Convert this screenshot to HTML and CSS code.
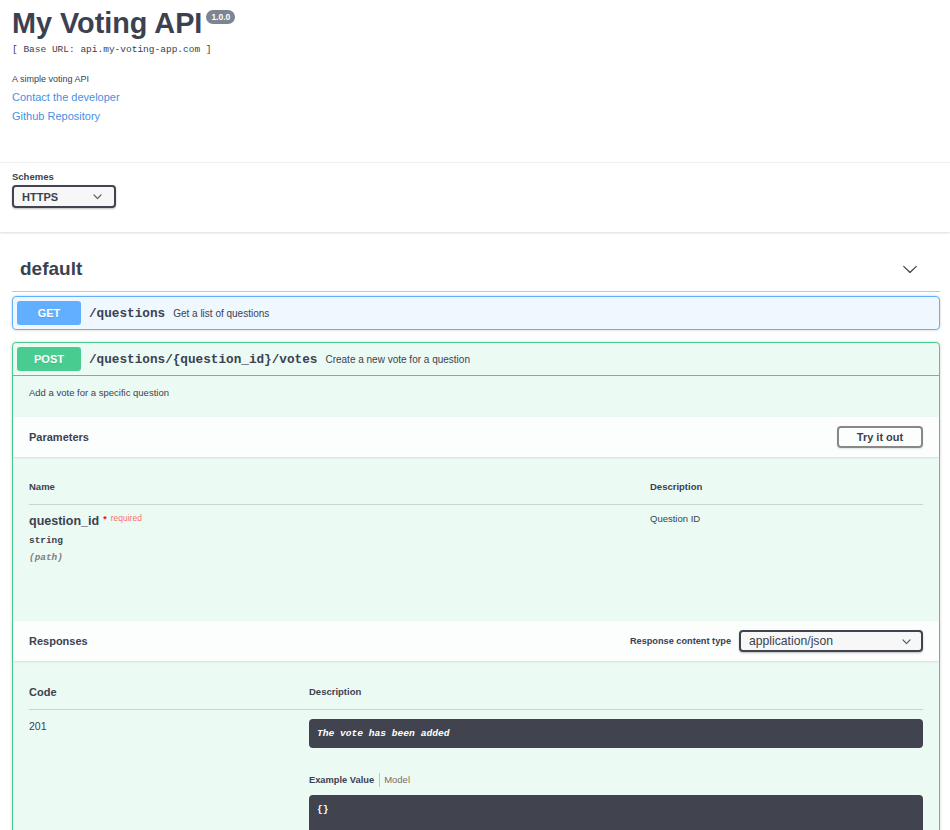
FILE: index.html
```html
<!DOCTYPE html>
<html>
<head>
<meta charset="utf-8">
<title>My Voting API</title>
<link rel="stylesheet" href="styles.css">
</head>
<body>
<div class="info">
  <div class="title-row">
    <h2 class="title">My Voting API</h2>
    <span class="version">1.0.0</span>
  </div>
  <div class="base-url">[ Base URL: api.my-voting-app.com ]</div>
  <p class="desc">A simple voting API</p>
  <a class="link" href="#">Contact the developer</a>
  <a class="link" href="#">Github Repository</a>
</div>

<div class="schemes">
  <div class="schemes-label">Schemes</div>
  <div class="select scheme-select">
    <span>HTTPS</span>
    <svg class="sel-arrow" width="9" height="9" viewBox="0 0 20 20"><path d="M17.418 6.109c.272-.268.709-.268.979 0s.271.701 0 .969l-7.908 7.83c-.27.268-.707.268-.979 0l-7.908-7.83c-.27-.268-.27-.701 0-.969.271-.268.709-.268.979 0L10 13.25l7.418-7.141z" fill="#3b4151" stroke="#3b4151" stroke-width="1"/></svg>
  </div>
</div>

<div class="wrapper">
  <div class="tag">
    <h3 class="tag-title">default</h3>
    <svg class="tag-arrow" width="16" height="16" viewBox="0 0 20 20"><path d="M17.418 6.109c.272-.268.709-.268.979 0s.271.701 0 .969l-7.908 7.83c-.27.268-.707.268-.979 0l-7.908-7.830c-.27-.268-.27-.701 0-.969.271-.268.709-.268.979 0L10 13.25l7.418-7.141z" fill="#3b4151"/></svg>
  </div>

  <div class="opblock get">
    <div class="summary">
      <span class="method">GET</span>
      <span class="path">/questions</span>
      <span class="summary-desc">Get a list of questions</span>
    </div>
  </div>

  <div class="opblock post">
    <div class="summary">
      <span class="method">POST</span>
      <span class="path">/questions/{question_id}/votes</span>
      <span class="summary-desc">Create a new vote for a question</span>
    </div>
    <div class="op-body">
      <div class="op-desc">Add a vote for a specific question</div>

      <div class="section-header">
        <h4 class="section-title">Parameters</h4>
        <button class="btn">Try it out</button>
      </div>
      <div class="params">
        <div class="params-head">
          <div>Name</div>
          <div>Description</div>
        </div>
        <div class="params-row">
          <div>
            <div class="param-name">question_id<span class="star">*</span><span class="req">required</span></div>
            <div class="param-type">string</div>
            <div class="param-in">(path)</div>
          </div>
          <div class="param-desc">Question ID</div>
        </div>
      </div>

      <div class="section-header">
        <h4 class="section-title">Responses</h4>
        <div class="ct">
          <span class="ct-label">Response content type</span>
          <div class="select ct-select">
            <span>application/json</span>
            <svg class="sel-arrow" width="9" height="9" viewBox="0 0 20 20"><path d="M17.418 6.109c.272-.268.709-.268.979 0s.271.701 0 .969l-7.908 7.83c-.27.268-.707.268-.979 0l-7.908-7.83c-.27-.268-.27-.701 0-.969.271-.268.709-.268.979 0L10 13.25l7.418-7.141z" fill="#3b4151" stroke="#3b4151" stroke-width="1"/></svg>
          </div>
        </div>
      </div>
      <div class="responses">
        <div class="resp-head">
          <div class="resp-code-h">Code</div>
          <div class="resp-desc-h">Description</div>
        </div>
        <div class="resp-row">
          <div class="resp-code">201</div>
          <div>
            <div class="md-box">The vote has been added</div>
            <div class="tabs">
              <span class="tab-active">Example Value</span>
              <span class="tab">Model</span>
            </div>
            <div class="code-box">{}</div>
          </div>
        </div>
      </div>
    </div>
  </div>
</div>
</body>
</html>
```

FILE: styles.css
```css
html {
  overflow: hidden;
}

body {
  margin: 0;
  font-family: "Liberation Sans", Arial, sans-serif;
  color: #3b4151;
  background: #fff;
}

.info {
  padding: 5px 12px 0;
}

.title-row {
  display: flex;
  align-items: flex-start;
}

.title {
  margin: 0;
  font-size: 28.8px;
  line-height: 36px;
  font-weight: 700;
  color: #3b4151;
}

.version {
  margin: 5px 0 0 4px;
  padding: 0 5px;
  background: #7d8492;
  color: #fff;
  font-size: 8.5px;
  font-weight: 700;
  line-height: 14px;
  border-radius: 57px;
}

.base-url {
  margin-top: 3px;
  font-family: "Liberation Mono", "Courier New", monospace;
  font-size: 9.5px;
  line-height: 12px;
}

.desc {
  margin: 17px 0 0;
  font-size: 9px;
  line-height: 12px;
}

.link {
  display: block;
  margin-top: 5px;
  font-size: 11px;
  line-height: 14px;
  color: #4990e2;
  text-decoration: none;
}

.schemes {
  margin-top: 40px;
  padding: 8px 12px 24px;
  background: #fff;
  box-shadow: 0 1px 2px 0 rgba(0, 0, 0, 0.15), 0 -1px 1px 0 rgba(0, 0, 0, 0.05);
}

.schemes-label {
  font-size: 9.5px;
  font-weight: 700;
  line-height: 12px;
}

.select {
  display: flex;
  align-items: center;
  justify-content: space-between;
  box-sizing: border-box;
  border: 2px solid #41444e;
  border-radius: 4px;
  background: #f7f7f7;
  box-shadow: 0 1px 2px 0 rgba(0, 0, 0, 0.25);
  color: #3b4151;
}

.scheme-select {
  margin-top: 2px;
  width: 104px;
  height: 23px;
  padding: 0 12px 0 8px;
  font-size: 11px;
  font-weight: 700;
}

.sel-arrow {
  display: block;
}

.wrapper {
  padding: 16px 10px 0 12px;
}

.tag {
  display: flex;
  align-items: center;
  justify-content: space-between;
  padding: 9px 22px 10px 8px;
  border-bottom: 1px solid rgba(59, 65, 81, 0.3);
}

.tag-title {
  margin: 0;
  font-size: 19px;
  line-height: 24px;
  font-weight: 700;
}

.tag-arrow {
  display: block;
}

.opblock {
  margin: 4px 0 12px;
  border: 1px solid;
  border-radius: 4px;
  box-shadow: 0 0 3px rgba(0, 0, 0, 0.19);
}

.opblock.get {
  border-color: #61affe;
  background: rgba(97, 175, 254, 0.1);
}

.opblock.post {
  border-color: #49cc90;
  background: rgba(73, 204, 144, 0.1);
}

.summary {
  display: flex;
  align-items: center;
  padding: 4px;
}

.post .summary {
  border-bottom: 1px solid #49cc90;
}

.method {
  width: 64px;
  line-height: 24px;
  text-align: center;
  border-radius: 3px;
  color: #fff;
  font-size: 11px;
  font-weight: 700;
  text-shadow: 0 1px 0 rgba(0, 0, 0, 0.1);
}

.get .method {
  background: #61affe;
}

.post .method {
  background: #49cc90;
}

.path {
  padding: 0 8px;
  font-family: "Liberation Mono", "Courier New", monospace;
  font-size: 12.7px;
  font-weight: 700;
}

.summary-desc {
  font-size: 10px;
}

.op-desc {
  padding: 10px 16px 17px;
  font-size: 9.5px;
  line-height: 14px;
}

.section-header {
  display: flex;
  align-items: center;
  justify-content: space-between;
  box-sizing: border-box;
  height: 40px;
  padding: 0 16px;
  background: rgba(255, 255, 255, 0.8);
  box-shadow: 0 1px 2px rgba(0, 0, 0, 0.1);
}

.section-title {
  margin: 0;
  font-size: 11px;
  font-weight: 700;
}

.btn {
  box-sizing: border-box;
  width: 86px;
  height: 22px;
  padding: 0;
  border: 2px solid #888;
  border-radius: 4px;
  background: transparent;
  box-shadow: 0 1px 2px rgba(0, 0, 0, 0.1);
  font-family: "Liberation Sans", Arial, sans-serif;
  font-size: 11px;
  font-weight: 700;
  color: #3b4151;
}

.params {
  padding: 24px 16px 57px;
}

.params-head {
  display: grid;
  grid-template-columns: 621px 1fr;
  padding-bottom: 11px;
  border-bottom: 1px solid rgba(59, 65, 81, 0.2);
  font-size: 9.5px;
  font-weight: 700;
  line-height: 12px;
}

.params-row {
  display: grid;
  grid-template-columns: 621px 1fr;
  padding-top: 8px;
}

.param-name {
  font-size: 12.5px;
  font-weight: 700;
  line-height: 16px;
}

.star {
  margin-left: 4px;
  color: #f00;
  font-size: 9px;
  line-height: 0;
  vertical-align: 3px;
}

.req {
  margin-left: 4px;
  color: rgba(255, 0, 0, 0.6);
  font-size: 8.5px;
  font-weight: 400;
  line-height: 0;
  vertical-align: 4px;
}

.param-type {
  margin-top: 6px;
  font-family: "Liberation Mono", "Courier New", monospace;
  font-size: 9.4px;
  font-weight: 700;
  line-height: 12px;
}

.param-in {
  margin-top: 5px;
  font-family: "Liberation Mono", "Courier New", monospace;
  font-size: 9.4px;
  font-weight: 700;
  font-style: italic;
  line-height: 12px;
  color: #808080;
}

.param-desc {
  font-size: 9.5px;
  line-height: 12px;
}

.ct {
  display: flex;
  align-items: center;
}

.ct-label {
  margin-right: 8px;
  font-size: 9.2px;
  font-weight: 700;
}

.ct-select {
  width: 184px;
  height: 22px;
  padding: 0 10px 0 8px;
  font-size: 12.2px;
}

.responses {
  padding: 24px 16px 40px;
}

.resp-head {
  display: grid;
  grid-template-columns: 280px 1fr;
  padding-bottom: 10px;
  border-bottom: 1px solid rgba(59, 65, 81, 0.2);
  line-height: 14px;
  font-weight: 700;
}

.resp-code-h {
  font-size: 11px;
}

.resp-desc-h {
  font-size: 9.5px;
}

.resp-row {
  display: grid;
  grid-template-columns: 280px 1fr;
  padding-top: 9px;
}

.resp-code {
  font-size: 10.5px;
  line-height: 14px;
}

.md-box {
  padding: 8px;
  border-radius: 4px;
  background: #41444e;
  color: #fff;
  font-family: "Liberation Mono", "Courier New", monospace;
  font-size: 9.6px;
  font-weight: 700;
  font-style: italic;
  line-height: 13px;
}

.tabs {
  display: flex;
  margin-top: 25px;
  font-size: 9.5px;
  line-height: 14px;
}

.tab-active {
  padding-right: 5px;
  border-right: 1px solid rgba(0, 0, 0, 0.2);
  font-weight: 700;
  font-size: 9.3px;
}

.tab {
  padding-left: 4px;
  color: #7b6d5f;
}

.code-box {
  height: 80px;
  margin-top: 8px;
  padding: 8px;
  border-radius: 4px;
  background: #41444e;
  color: #fff;
  font-family: "Liberation Mono", "Courier New", monospace;
  font-size: 9.6px;
  font-weight: 700;
  line-height: 13px;
}
```
